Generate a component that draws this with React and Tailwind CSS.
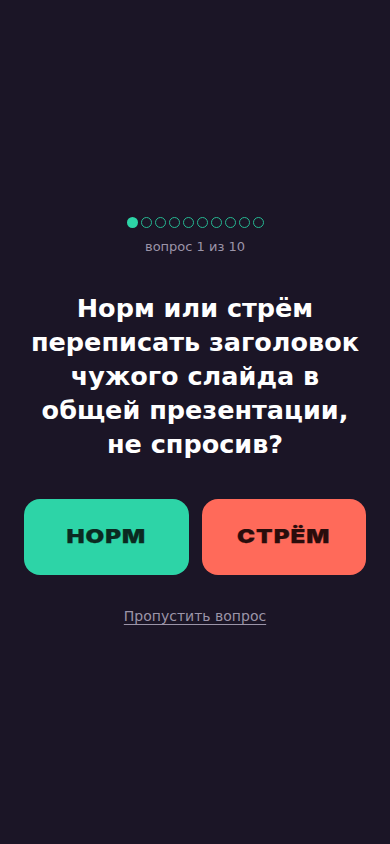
import React from "react";

const Dots = ({ total = 10, current = 0 }) => (
  <div className="flex items-center gap-[3px]">
    {Array.from({ length: total }).map((_, i) => (
      <div
        key={i}
        className={
          i === current
            ? "w-[11px] h-[11px] rounded-full bg-[#2dd4a7]"
            : "w-[11px] h-[11px] rounded-full border-[1.5px] border-[#26b892]"
        }
      />
    ))}
  </div>
);

const AnswerButton = ({ children, className = "" }) => (
  <button
    className={`flex-1 h-[76px] rounded-[16px] flex items-center justify-center ${className}`}
  >
    <span className="font-['Inter',sans-serif] font-black text-[19px] tracking-[0.04em] inline-block scale-x-[1.27] [-webkit-text-stroke:0.25px_currentColor]">
      {children}
    </span>
  </button>
);

export default function App() {
  return (
    <div className="min-h-screen bg-[#1b1526] flex flex-col items-center justify-center px-6 font-['DejaVu_Sans',sans-serif]">
      <Dots />
      <div className="mt-[9px] text-[13px] text-[#9b94a8]">вопрос 1 из 10</div>

      <h1 className="mt-[34px] -mx-3 text-[25.5px] leading-[34px] font-bold text-white text-center">
        Норм или стрём
        <br />
        переписать заголовок
        <br />
        чужого слайда в
        <br />
        общей презентации,
        <br />
        не спросив?
      </h1>

      <div className="mt-[38px] w-full flex gap-[13px]">
        <AnswerButton className="bg-[#2dd4a7] text-[#0b2a21]">НОРМ</AnswerButton>
        <AnswerButton className="bg-[#ff6a5a] text-[#2a0d0c]">СТРЁМ</AnswerButton>
      </div>

      <a
        href="#"
        className="mt-[31px] text-[14px] text-[#9b94a8] underline underline-offset-[3px]"
      >
        Пропустить вопрос
      </a>
    </div>
  );
}
